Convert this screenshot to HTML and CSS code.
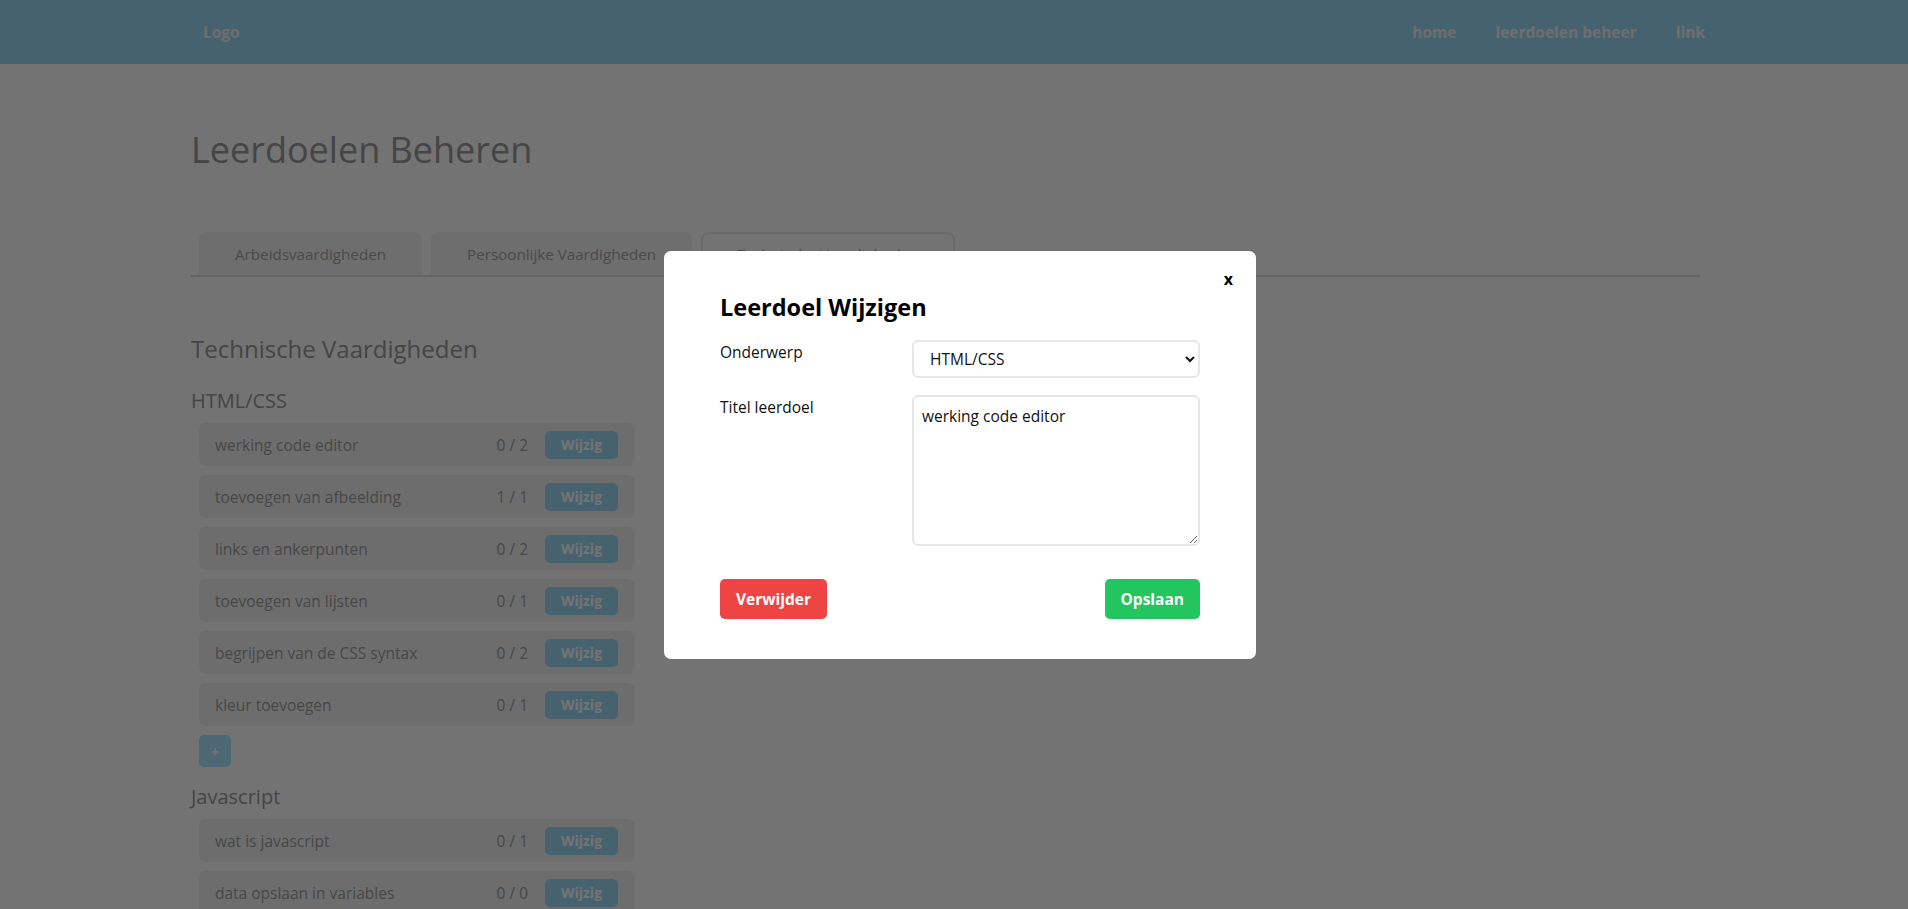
FILE: index.html
```html
<!DOCTYPE html>
<html lang="nl">
<head>
<meta charset="utf-8">
<title>Leerdoelen Beheren</title>
<link rel="stylesheet" href="styles.css">
</head>
<body>
<header class="navbar">
  <a class="logo" href="#">Logo</a>
  <nav class="nav-links">
    <a href="#">home</a>
    <a href="#">leerdoelen beheer</a>
    <a href="#">link</a>
  </nav>
</header>

<main class="container">
  <h1 class="page-title">Leerdoelen Beheren</h1>

  <div class="tabs">
    <button class="tab">Arbeidsvaardigheden</button>
    <button class="tab">Persoonlijke Vaardigheden</button>
    <button class="tab tab-active">Technische Vaardigheden</button>
  </div>

  <section class="category">
    <h2 class="category-title">Technische Vaardigheden</h2>

    <div class="topic">
      <h3 class="topic-title">HTML/CSS</h3>
      <ul class="goal-list">
        <li class="goal"><span class="goal-name">werking code editor</span><span class="goal-count">0 / 2</span><button class="btn-edit">Wijzig</button></li>
        <li class="goal"><span class="goal-name">toevoegen van afbeelding</span><span class="goal-count">1 / 1</span><button class="btn-edit">Wijzig</button></li>
        <li class="goal"><span class="goal-name">links en ankerpunten</span><span class="goal-count">0 / 2</span><button class="btn-edit">Wijzig</button></li>
        <li class="goal"><span class="goal-name">toevoegen van lijsten</span><span class="goal-count">0 / 1</span><button class="btn-edit">Wijzig</button></li>
        <li class="goal"><span class="goal-name">begrijpen van de CSS syntax</span><span class="goal-count">0 / 2</span><button class="btn-edit">Wijzig</button></li>
        <li class="goal"><span class="goal-name">kleur toevoegen</span><span class="goal-count">0 / 1</span><button class="btn-edit">Wijzig</button></li>
      </ul>
      <button class="btn-add">+</button>
    </div>

    <div class="topic">
      <h3 class="topic-title">Javascript</h3>
      <ul class="goal-list">
        <li class="goal"><span class="goal-name">wat is javascript</span><span class="goal-count">0 / 1</span><button class="btn-edit">Wijzig</button></li>
        <li class="goal"><span class="goal-name">data opslaan in variables</span><span class="goal-count">0 / 0</span><button class="btn-edit">Wijzig</button></li>
      </ul>
    </div>
  </section>
</main>

<div class="backdrop">
  <div class="modal">
    <button class="modal-close">x</button>
    <h2 class="modal-title">Leerdoel Wijzigen</h2>
    <form class="modal-form">
      <label class="form-label" for="onderwerp">Onderwerp</label>
      <select class="form-select" id="onderwerp">
        <option>HTML/CSS</option>
        <option>Javascript</option>
      </select>
      <label class="form-label" for="titel">Titel leerdoel</label>
      <textarea class="form-textarea" id="titel">werking code editor</textarea>
    </form>
    <div class="modal-actions">
      <button class="btn btn-danger">Verwijder</button>
      <button class="btn btn-success">Opslaan</button>
    </div>
  </div>
</div>
</body>
</html>
```

FILE: styles.css
```css
* {
  box-sizing: border-box;
}

html,
body {
  height: 100%;
  overflow: hidden;
}

body {
  margin: 0;
  background: #ffffff;
  font-family: "Open Sans", "Noto Sans", sans-serif;
  font-size: 16px;
  color: #9e9e9e;
}

/* ---------- navbar ---------- */
.navbar {
  height: 64px;
  background: #9cdaf7;
  display: flex;
  align-items: center;
  justify-content: space-between;
  padding: 0 203px;
}

.logo,
.nav-links a {
  color: #f4f4f4;
  font-weight: 700;
  font-size: 15.5px;
  text-decoration: none;
}

.nav-links {
  display: flex;
  gap: 39px;
}

/* ---------- main ---------- */
.container {
  margin-left: 191px;
  width: 1509px;
  padding-top: 64px;
}

.page-title {
  margin: 0;
  font-size: 36px;
  line-height: 43px;
  font-weight: 500;
  color: #999999;
}

.tabs {
  margin-top: 61px;
  display: flex;
  gap: 9px;
  padding-left: 8px;
  border-bottom: 2px solid #e3e3e3;
}

.tab {
  font-family: inherit;
  font-size: 15.2px;
  line-height: 21px;
  padding: 10px 34px;
  border: 2px solid transparent;
  border-bottom: none;
  border-radius: 8px 8px 0 0;
  background: #f4f4f4;
  color: #a4a4a4;
}

.tab-active {
  background: transparent;
  border-color: #ebebeb;
}

.category-title {
  margin: 57px 0 0;
  font-size: 24px;
  line-height: 29px;
  font-weight: 500;
  color: #999999;
}

.topic-title {
  margin: 26px 0 10px;
  font-size: 20px;
  line-height: 24px;
  font-weight: 500;
  color: #999999;
}

.topic + .topic .topic-title {
  margin-top: 18px;
}

.goal-list {
  list-style: none;
  margin: 0 0 0 8px;
  padding: 0;
  width: 435px;
  display: flex;
  flex-direction: column;
  gap: 9px;
}

.goal {
  height: 43px;
  display: flex;
  align-items: center;
  padding: 0 16px;
  background: #f2f2f2;
  border-radius: 6px;
  color: #9e9e9e;
  font-size: 15.5px;
}

.goal-name {
  flex: 1;
}

.goal-count {
  margin-right: 17px;
}

.btn-edit {
  height: 28px;
  width: 73px;
  padding: 0;
  border: none;
  border-radius: 5px;
  background: #9cdaf7;
  color: #ffffff;
  font-family: inherit;
  font-weight: 700;
  font-size: 14px;
}

.btn-add {
  display: block;
  margin: 9px 0 0 8px;
  width: 32px;
  height: 32px;
  border: none;
  border-radius: 5px;
  background: #aee6ff;
  color: #ffffff;
  font-family: inherit;
  font-weight: 700;
  font-size: 14px;
}

/* ---------- modal ---------- */
.backdrop {
  position: fixed;
  inset: 0;
  background: rgba(0, 0, 0, 0.55);
}

.modal {
  position: absolute;
  left: 664px;
  top: 251px;
  width: 592px;
  background: #ffffff;
  border-radius: 7px;
  padding: 41px 56px 40px;
  color: #111111;
}

.modal-close {
  position: absolute;
  top: 13px;
  right: 19px;
  border: none;
  background: none;
  font-family: inherit;
  font-weight: 700;
  font-size: 16px;
  color: #000000;
  padding: 4px;
}

.modal-title {
  margin: 0;
  font-size: 23.5px;
  line-height: 30px;
  font-weight: 700;
  color: #000000;
}

.modal-form {
  margin-top: 18px;
  display: grid;
  grid-template-columns: 192px 288px;
  row-gap: 17px;
}

.form-label {
  font-size: 15.5px;
  line-height: 22px;
  color: #111111;
  padding-top: 1px;
}

.form-select {
  height: 38px;
  border: 2px solid #e5e7eb;
  border-radius: 6px;
  background: #ffffff;
  padding: 0 10px 0 12px;
  font-family: inherit;
  font-size: 15.5px;
  color: #111111;
}

.form-textarea {
  height: 151px;
  border: 2px solid #e5e7eb;
  border-radius: 6px;
  padding: 8px 8px;
  font-family: inherit;
  font-size: 15.5px;
  line-height: 22px;
  color: #111111;
  resize: vertical;
}

.modal-actions {
  margin-top: 33px;
  display: flex;
  justify-content: space-between;
}

.btn {
  height: 40px;
  padding: 0 16px;
  border: none;
  border-radius: 5px;
  color: #ffffff;
  font-family: inherit;
  font-weight: 700;
  font-size: 15.5px;
}

.btn-danger {
  background: #ef4444;
}

.btn-success {
  background: #22c55e;
}
```
